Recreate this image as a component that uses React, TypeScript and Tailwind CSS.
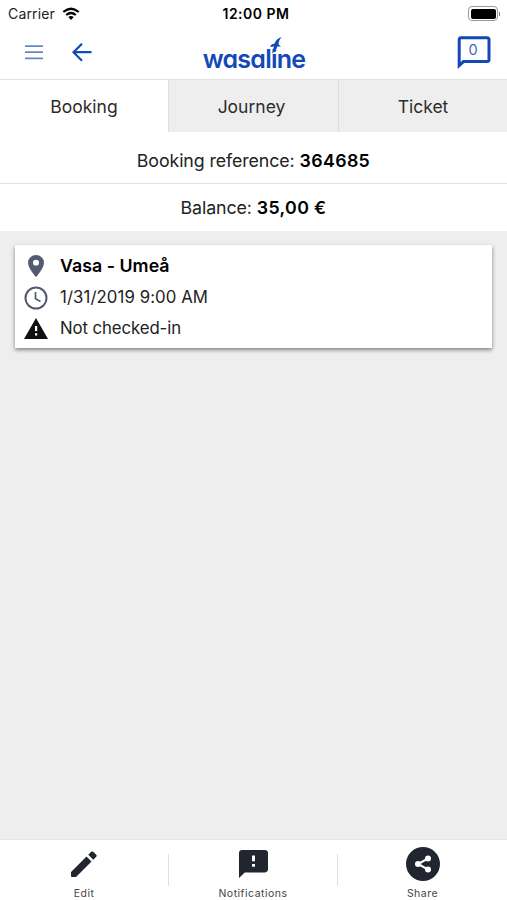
import React from 'react';

interface TabProps {
  label: string;
  className: string;
}

const Tab: React.FC<TabProps> = ({ label, className }) => (
  <button className={`h-full text-[#2c2c2c] ${className}`}>{label}</button>
);

const InfoRow: React.FC<{ label: string; value: string; className: string }> = ({ label, value, className }) => (
  <div className={`flex justify-center gap-[5px] bg-white text-[17.8px] text-[#222] ${className}`}>
    <span className="tracking-[-0.1px]">{label}</span>
    <span className="font-semibold tracking-[0.35px] text-black">{value}</span>
  </div>
);

const CardRow: React.FC<{ children: React.ReactNode; icon: React.ReactNode }> = ({ children, icon }) => (
  <div className="flex h-[31px] items-center">
    <span className="flex w-[42px] justify-center shrink-0">{icon}</span>
    <span className="ml-[3px] pt-[2px]">{children}</span>
  </div>
);

const FooterItem: React.FC<{ label: string; children: React.ReactNode; divider?: boolean }> = ({ label, children, divider }) => (
  <div className="flex flex-1 items-start pt-[3px]">
    <button className="flex flex-1 flex-col items-center text-[10.5px] leading-[18px] tracking-[0.5px] text-[#444]">
      <span className="flex h-[42px] items-center justify-center">{children}</span>
      {label}
    </button>
    {divider && <div className="mt-[11px] h-8 w-px bg-[#dedede]" />}
  </div>
);

const WifiIcon = () => (
  <svg width="18" height="14" viewBox="0 0 18 14" fill="none" stroke="#000" strokeWidth="2.2">
    <path d="M1.3 5Q9-1.5 16.7 5" />
    <path d="M4.2 8Q9 4 13.8 8" />
    <path d="M9 13L6.3 10.1Q9 8 11.7 10.1Z" fill="#000" stroke="none" />
  </svg>
);

const Logo = () => (
  <div className="relative mt-[11px] text-[#1248b8]">
    <span className="block text-[25px] font-semibold leading-[30px] tracking-[-0.75px] [font-feature-settings:'cv11']">wasaline</span>
    <svg className="absolute left-[66px] -top-[7px]" width="15" height="17" viewBox="0 0 15 17" fill="currentColor">
      <path d="M12.8 0C9 1 6.4 3.7 5.6 6.6L2.5 7.6L1 10L5 9.6L3 16.5C6 14.5 7.8 11.8 8.3 9.4L12 9.6L9.5 7.2C9.6 4.4 10.8 2 12.8 0Z" />
    </svg>
  </div>
);

const App: React.FC = () => (
  <div className="flex h-[900px] w-[507px] flex-col overflow-hidden bg-[#eee] font-[Inter,sans-serif] text-[#222]">
    <div className="grid h-[27px] grid-cols-3 items-center bg-white text-[14px] text-black">
      <div className="flex items-center gap-[7px] pl-2">
        <span className="tracking-[0.15px] text-[#222]">Carrier</span>
        <WifiIcon />
      </div>
      <span className="pl-[5px] text-center font-semibold tracking-[0.5px]">12:00 PM</span>
      <div className="flex items-center justify-end pr-[7px]">
        <div className="h-[15px] w-[30px] rounded-[4px] border border-[#999] p-[1.5px]">
          <div className="h-full rounded-[2px] bg-black" />
        </div>
        <div className="ml-px h-1 w-px bg-[#777]" />
      </div>
    </div>

    <header className="flex h-[53px] items-center justify-between border-b border-[#dfdfdf] bg-white pl-[25px] pr-4">
      <div className="flex w-[86px] items-center gap-[29px]">
        <svg width="18" height="16" viewBox="0 0 18 16" stroke="#6686cb" strokeWidth="1.7">
          <path d="M0 1.2H18M0 7.2H18M0 13.4H18" />
        </svg>
        <svg width="20" height="20" viewBox="0 0 20 20" fill="none" stroke="#1248b8" strokeWidth="2.2">
          <path d="M19.5 9.2H2M10 .7L1.5 9.2L10 17.7" />
        </svg>
      </div>
      <Logo />
      <div className="flex w-[94px] justify-end">
        <svg width="34" height="35" viewBox="0 0 34 35">
          <path d="M2.2 29V3.2Q2.2 1.2 4.2 1.2H30Q32 1.2 32 3.2V23Q32 25 30 25H6.5Z" fill="none" stroke="#1248b8" strokeWidth="3" transform="translate(0 .6)" />
          <text x="16" y="19" textAnchor="middle" fontSize="14.5" fill="#3f69bf">0</text>
        </svg>
      </div>
    </header>

    <nav className="flex h-[52px] shrink-0 text-[17.5px]">
      <Tab label="Booking" className="w-[168px] bg-white pt-[3px]" />
      <Tab label="Journey" className="w-[170px] border-l border-[#dedede] bg-[#eee] pt-[3px] pr-[4px]" />
      <Tab label="Ticket" className="w-[169px] border-l border-[#dedede] bg-[#eee] pt-[3px]" />
    </nav>

    <InfoRow label="Booking reference:" value="364685" className="h-[52px] border-b border-[#dfdfdf] pt-4" />
    <InfoRow label="Balance:" value="35,00 €" className="h-[47px] pt-[11px]" />

    <main className="flex-1 px-[15px] pt-[14px]">
      <section className="h-[103px] bg-white pt-[5px] text-[16.8px] shadow-[0_2px_4px_rgba(0,0,0,0.45)]">
        <CardRow
          icon={
            <svg className="mt-px" width="16" height="22" viewBox="0 0 16 23" preserveAspectRatio="none" fill="#555a74">
              <path fillRule="evenodd" d="M8 0A8 8 0 0 0 0 8C0 14 8 23 8 23S16 14 16 8A8 8 0 0 0 8 0ZM8 5A3 3 0 1 1 8 11A3 3 0 0 1 8 5Z" />
            </svg>
          }
        >
          <b className="text-[17.8px] font-semibold tracking-[0.02px] text-black">Vasa - Umeå</b>
        </CardRow>
        <CardRow
          icon={
            <svg className="mt-[2px]" width="24" height="24" viewBox="0 0 24 24" fill="none" stroke="#555a74" strokeWidth="2">
              <circle cx="12" cy="12" r="10.5" />
              <path d="M11.5 6V12.7L16.5 15.5" strokeWidth="1.7" />
            </svg>
          }
        >
          <span className="tracking-[0.08px]">1/31/2019 9:00 AM</span>
        </CardRow>
        <CardRow
          icon={
            <svg className="mt-px" width="24" height="21" viewBox="0 0 24 21" fill="#111">
              <path fillRule="evenodd" d="M12 0L24 21H0ZM11 8V13H13.2V8ZM11 15.2V17.5H13.2V15.2Z" />
            </svg>
          }
        >
          <span className="tracking-[-0.1px]">Not checked-in</span>
        </CardRow>
      </section>
    </main>

    <footer className="flex h-[61px] border-t border-[#e4e4e4] bg-white">
      <FooterItem label="Edit" divider>
        <svg width="26" height="26" viewBox="0 0 26 26" fill="#212530">
          <path d="M0 21L15.5 5.5L20.5 10.5L5 26H1Q0 26 0 25ZM17.3 3.7L20.2 .8Q21.2 0 22.2 .8L25.2 3.8Q26.2 4.8 25.2 5.8L22.3 8.7Z" />
        </svg>
      </FooterItem>
      <FooterItem label="Notifications" divider>
        <svg width="29" height="28" viewBox="2 2 20 20" preserveAspectRatio="none" fill="#212530">
          <path d="M20 2H4c-1.1 0-2 .9-2 2v18l4-4h14c1.1 0 2-.9 2-2V4c0-1.1-.9-2-2-2zm-7 12h-2v-2h2v2zm0-4h-2V6h2v4z" />
        </svg>
      </FooterItem>
      <FooterItem label="Share">
        <svg width="34" height="34" viewBox="0 0 34 34">
          <circle cx="17" cy="17" r="17" fill="#212530" />
          <path d="M22 11.5L12 17L22 22.5" stroke="#fff" strokeWidth="2" fill="none" />
          <g fill="#fff">
            <circle cx="22" cy="11.5" r="3" />
            <circle cx="12" cy="17" r="3" />
            <circle cx="22" cy="22.5" r="3" />
          </g>
        </svg>
      </FooterItem>
    </footer>
  </div>
);

export default App;
